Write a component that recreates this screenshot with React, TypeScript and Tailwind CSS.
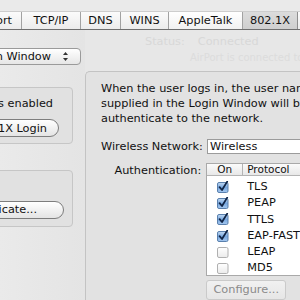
import React from "react";

function Check({ on }: { on: boolean }) {
  return (
    <svg width="12" height="12" viewBox="0 0 12 12" className="block">
      <defs>
        <linearGradient id="cbOn" x1="0" y1="0" x2="0" y2="1">
          <stop offset="0" stopColor="#c3daf3" />
          <stop offset="0.5" stopColor="#78a8e0" />
          <stop offset="1" stopColor="#a6c8ef" />
        </linearGradient>
        <linearGradient id="cbOff" x1="0" y1="0" x2="0" y2="1">
          <stop offset="0" stopColor="#ffffff" />
          <stop offset="1" stopColor="#ebebeb" />
        </linearGradient>
      </defs>
      <rect x="0.5" y="1.5" width="10.5" height="10" rx="1.5" fill={on ? "url(#cbOn)" : "url(#cbOff)"} stroke={on ? "#5a80ad" : "#b0b0b0"} />
      {on && <path d="M2.6 6.2 L5 9 L10.2 0.6" fill="none" stroke="#102445" strokeWidth="1.8" strokeLinecap="round" strokeLinejoin="round" />}
    </svg>
  );
}

const protocols: [string, boolean][] = [
  ["TLS", true],
  ["PEAP", true],
  ["TTLS", true],
  ["EAP-FAST", true],
  ["LEAP", false],
  ["MD5", false],
];

export default function App() {
  return (
    <div className="w-[300px] h-[300px] overflow-hidden bg-[#e7e7e7] text-[11.3px] text-[#111] font-['DejaVu_Sans',sans-serif] leading-none">
      <div className="h-[11px] bg-[#eaeaea]" />
      {/* Tab bar */}
      <div className="h-[19px] flex border-t border-b border-t-[#cdcdcd] border-b-[#6f6f6f] bg-gradient-to-b from-[#fbfbfb] to-[#ececec]">
        <div className="w-[22px] shrink-0 border-r border-[#a2a2a2] flex items-center justify-end pr-[9px] overflow-hidden whitespace-nowrap">AirPort</div>
        <div className="w-[59px] shrink-0 border-r border-[#a2a2a2] flex items-center justify-center">TCP/IP</div>
        <div className="w-[40px] shrink-0 border-r border-[#a2a2a2] flex items-center justify-center">DNS</div>
        <div className="w-[48px] shrink-0 border-r border-[#a2a2a2] flex items-center justify-center">WINS</div>
        <div className="w-[74px] shrink-0 border-r border-[#a2a2a2] flex items-center justify-center bg-gradient-to-b from-[#ffffff] to-[#f1f1f1]">AppleTalk</div>
        <div className="w-[55px] shrink-0 border-r border-[#8e8e8e] flex items-center justify-center bg-gradient-to-b from-[#dcdcdc] to-[#cfcfcf]">802.1X</div>
        <div className="flex-1" />
      </div>

      {/* Body */}
      <div className="flex h-[270px]">
        {/* Left column */}
        <div className="w-[85px] shrink-0 flex flex-col items-end pr-[12px] bg-gradient-to-r from-[#eaeaea] to-[#e4e4e4]">
          <div className="mt-[18px] mr-[-8px] h-[17px] w-[120px] flex items-center justify-end rounded-r-[4px] border border-[#9a9a9a] bg-gradient-to-b from-[#ffffff] to-[#e6e6e6] whitespace-nowrap">
            <span>Login Window</span>
            <span className="w-[29px] flex justify-center">
              <svg width="7" height="11" viewBox="0 0 7 11">
                <path d="M3.5 1 L6 4 L1 4 Z" fill="#333" />
                <path d="M3.5 10 L6 7 L1 7 Z" fill="#333" />
              </svg>
            </span>
          </div>
          <div className="mt-[22px] w-[120px] h-[57px] rounded-[4px] border border-[#c6c6c6] bg-[#e1e1e1] flex flex-col items-end">
            <div className="mt-[10px] mr-[19px] whitespace-nowrap">802.1X is enabled</div>
            <div className="mt-[10px] mr-[13px] h-[18px] w-[110px] rounded-full border border-[#7d7d7d] bg-gradient-to-b from-[#ffffff] to-[#e4e4e4] flex items-center justify-end pr-[11px] whitespace-nowrap">Log In to 802.1X Login</div>
          </div>
          <div className="mt-[26px] w-[120px] h-[57px] rounded-[4px] border border-[#c6c6c6] bg-[#e1e1e1] flex flex-col items-end">
            <div className="mt-[30px] mr-[8px] h-[18px] w-[110px] rounded-full border border-[#7d7d7d] bg-gradient-to-b from-[#ffffff] to-[#e4e4e4] flex items-center justify-end pr-[26px] whitespace-nowrap">Select Certificate...</div>
          </div>
        </div>

        {/* Right column */}
        <div className="flex-1 flex flex-col min-w-0">
          <div className="h-[45px] relative text-[#d8d8d8] whitespace-nowrap">
            <div className="flex pt-[6px] pl-[60px] gap-[13px]">
              <span>Status:</span>
              <span>Connected</span>
            </div>
            <div className="pl-[105px] pt-[6px] text-[10px] text-[#dcdcdc]">AirPort is connected to</div>
          </div>
          <div className="flex-1 rounded-tl-[5px] border-l border-t border-[#c3c3c3] bg-[#e2e2e2] pl-[15px] pt-[9px] whitespace-nowrap">
            <div className="leading-[15px]">
              When the user logs in, the user name
              <br />
              supplied in the Login Window will be
              <br />
              authenticate to the network.
            </div>
            <div className="mt-[13px] flex items-center">
              <div className="w-[101px] text-right">Wireless Network:</div>
              <div className="ml-[5px] flex-1 h-[15px] border border-[#9b9b9b] border-r-0 bg-white flex items-center pl-[2px]">Wireless</div>
            </div>
            <div className="mt-[9px] flex items-start">
              <div className="w-[101px] text-right mt-[2px]">Authentication:</div>
              <div className="ml-[5px] flex-1 flex flex-col">
                <div className="h-[113px] border border-[#a9a9a9] border-r-0 bg-white flex flex-col">
                  <div className="h-[12px] flex border-b border-[#b4b4b4] bg-gradient-to-b from-[#fbfbfb] to-[#e8e8e8] text-[10.5px]">
                    <div className="w-[36px] border-r border-[#b4b4b4] flex items-center justify-center">On</div>
                    <div className="pl-[4px] flex items-center">Protocol</div>
                  </div>
                  <div className="pt-[3px]">
                    {protocols.map(([name, on]) => (
                      <div key={name} className="h-[16.3px] flex items-center">
                        <div className="w-[36px] pl-[10px]">
                          <Check on={on} />
                        </div>
                        <div className="pl-[4px]">{name}</div>
                      </div>
                    ))}
                  </div>
                </div>
                <div className="mt-[4px] w-[80px] h-[20px] rounded-[3px] border border-[#cacaca] bg-gradient-to-b from-[#f1f1f1] to-[#e6e6e6] flex items-center justify-center text-[#8a8a8a]">Configure...</div>
              </div>
            </div>
          </div>
        </div>
      </div>
    </div>
  );
}
